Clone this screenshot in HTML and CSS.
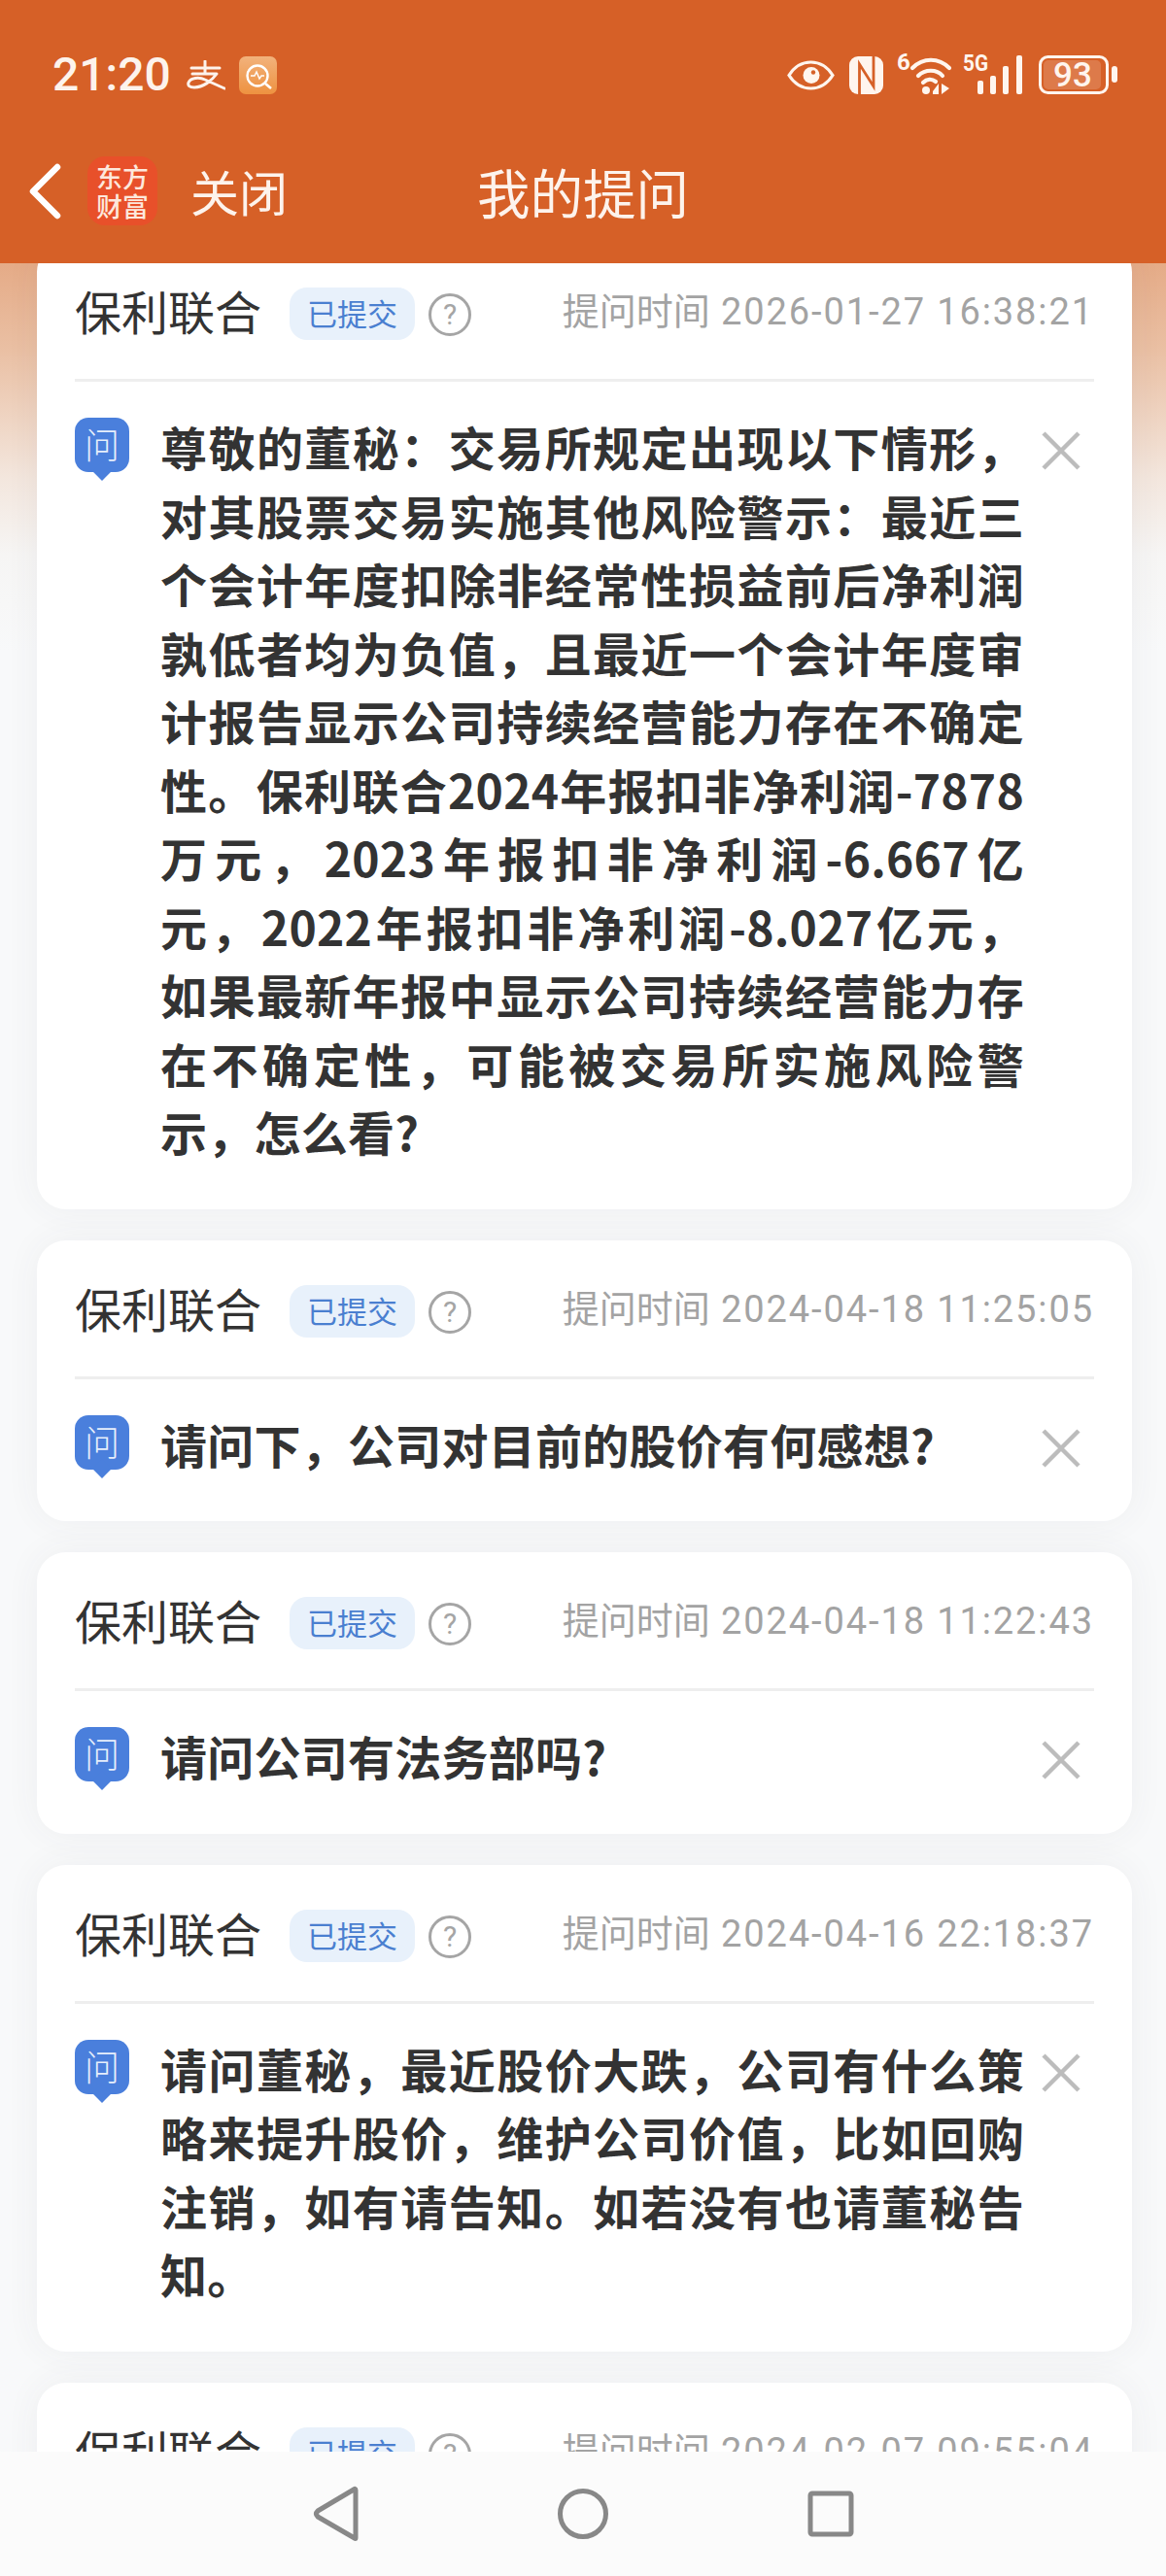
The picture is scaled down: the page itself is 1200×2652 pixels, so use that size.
FILE: index.html
```html
<!DOCTYPE html>
<html lang="zh-CN">
<head>
<meta charset="utf-8">
<title>我的提问</title>
<link rel="stylesheet" href="styles.css">
</head>
<body>
<div class="phone">
  <header class="top">
    <div class="status">
      <div class="status-left">
        <span class="clock">21:20</span>
        <svg class="ali" viewBox="0 0 41 31" width="41" height="31"><path d="M6 8h29M20 1v13M7 14h25C27 21 18 28 9 28 4 28 2 26 3 23 5 18 14 17 20 20L40 29" fill="none" stroke="#fdf3ec" stroke-width="3" stroke-linecap="round" stroke-linejoin="round"/></svg>
        <svg class="app" viewBox="0 0 39 39" width="39" height="39"><defs><linearGradient id="ag" x1="0" y1="0" x2="0" y2="1"><stop offset="0" stop-color="#f2b27c"/><stop offset="1" stop-color="#ee9240"/></linearGradient></defs><rect width="39" height="39" rx="7" fill="url(#ag)"/><circle cx="19" cy="20" r="10.5" fill="none" stroke="#fff" stroke-width="2.4"/><path d="M27 28l6 5" stroke="#fff" stroke-width="2.6"/><path d="M12 20h4l2-4 3 7 2-3h3" fill="none" stroke="#fff" stroke-width="1.4"/></svg>
      </div>
      <div class="status-right">
        <svg class="s-eye" viewBox="0 0 49 31" width="49" height="31"><path d="M2 15.500C8 6 16 2 24.500 2S41 6 47 15.500C41 25 33 29 24.500 29S8 25 2 15.500Z" fill="none" stroke="#fff5ee" stroke-width="3.200"/><circle cx="25" cy="15.500" r="8.500" fill="#fff5ee"/><circle cx="27" cy="12.500" r="2.200" fill="#d66027"/></svg>
        <svg class="s-nfc" viewBox="0 0 37 39" width="37" height="39"><rect x="1" width="35" height="39" rx="9" fill="#fff5ee"/><path d="M11.500 39V8L26 31V0" fill="none" stroke="#d66027" stroke-width="2.800"/></svg>
        <svg class="s-wifi" viewBox="0 0 56 42" width="56" height="42"><text x="0" y="16" class="mini">6</text><g fill="none" stroke="#fff5ee" stroke-width="4.200" stroke-linecap="round"><path d="M16 14C27 3 43 3 54 14"/><path d="M22 22C29 15 41 15 47 22"/><path d="M27 29C31 25 36 25 40 28"/></g><circle cx="30" cy="37" r="4" fill="#fff5ee"/><path d="M37 38l6-8v11h-6zM46 30v11l8-6z" fill="#fff5ee"/></svg>
        <svg class="s-sig" viewBox="0 0 62 40" width="62" height="40"><text x="0" y="16" class="mini" textLength="26" lengthAdjust="spacingAndGlyphs">5G</text><g fill="#fff5ee"><rect x="15" y="26" width="6" height="14" rx="2"/><rect x="28" y="21" width="6" height="19" rx="2"/><rect x="41" y="11" width="6" height="29" rx="2"/><rect x="55" y="0" width="6" height="40" rx="2"/></g></svg>
        <svg class="s-bat" viewBox="0 0 81 40" width="81" height="40"><rect x="1.500" y="1.500" width="69" height="37" rx="8" fill="none" stroke="#fff5ee" stroke-width="3"/><rect x="5" y="5" width="59" height="30" rx="5" fill="#fff5ee" fill-opacity=".18"/><text x="35" y="32" text-anchor="middle" class="batnum">93</text><rect x="75" y="11" width="6" height="17" rx="3" fill="#fff5ee"/></svg>
      </div>
    </div>
    <nav class="bar">
      <div class="bar-left">
        <svg class="back" viewBox="0 0 34 58" width="34" height="58"><path d="M30 4L5 29l25 25" fill="none" stroke="#fff" stroke-width="6.500" stroke-linecap="round" stroke-linejoin="round"/></svg>
        <div class="logo"><span>东方</span><span>财富</span></div>
        <span class="close">关闭</span>
      </div>
      <h1 class="title">我的提问</h1>
      <div></div>
    </nav>
  </header>

  <main class="list">
    <section class="card">
      <div class="head"><span class="name">保利联合</span><span class="badge">已提交</span><span class="help">?</span><span class="time"><span class="time-l">提问时间</span> 2026-01-27 16:38:21</span></div>
      <div class="body"><span class="q"><span>问</span></span><p class="text">尊敬的董秘：交易所规定出现以下情形，对其股票交易实施其他风险警示：最近三个会计年度扣除非经常性损益前后净利润孰低者均为负值，且最近一个会计年度审计报告显示公司持续经营能力存在不确定性。保利联合2024年报扣非净利润-7878万元，2023年报扣非净利润-6.667亿元，2022年报扣非净利润-8.027亿元，如果最新年报中显示公司持续经营能力存在不确定性，可能被交易所实施风险警示，怎么看?</p><svg class="x" viewBox="0 0 40 40" width="40" height="40"><path d="M2 2l36 36M38 2L2 38" stroke="#bcbcbc" stroke-width="4.500"/></svg></div>
    </section>
    <section class="card">
      <div class="head"><span class="name">保利联合</span><span class="badge">已提交</span><span class="help">?</span><span class="time"><span class="time-l">提问时间</span> 2024-04-18 11:25:05</span></div>
      <div class="body"><span class="q"><span>问</span></span><p class="text">请问下，公司对目前的股价有何感想?</p><svg class="x" viewBox="0 0 40 40" width="40" height="40"><path d="M2 2l36 36M38 2L2 38" stroke="#bcbcbc" stroke-width="4.500"/></svg></div>
    </section>
    <section class="card">
      <div class="head"><span class="name">保利联合</span><span class="badge">已提交</span><span class="help">?</span><span class="time"><span class="time-l">提问时间</span> 2024-04-18 11:22:43</span></div>
      <div class="body"><span class="q"><span>问</span></span><p class="text">请问公司有法务部吗?</p><svg class="x" viewBox="0 0 40 40" width="40" height="40"><path d="M2 2l36 36M38 2L2 38" stroke="#bcbcbc" stroke-width="4.500"/></svg></div>
    </section>
    <section class="card">
      <div class="head"><span class="name">保利联合</span><span class="badge">已提交</span><span class="help">?</span><span class="time"><span class="time-l">提问时间</span> 2024-04-16 22:18:37</span></div>
      <div class="body"><span class="q"><span>问</span></span><p class="text">请问董秘，最近股价大跌，公司有什么策略来提升股价，维护公司价值，比如回购注销，如有请告知。如若没有也请董秘告知。</p><svg class="x" viewBox="0 0 40 40" width="40" height="40"><path d="M2 2l36 36M38 2L2 38" stroke="#bcbcbc" stroke-width="4.500"/></svg></div>
    </section>
    <section class="card">
      <div class="head"><span class="name">保利联合</span><span class="badge">已提交</span><span class="help">?</span><span class="time"><span class="time-l">提问时间</span> 2024-02-07 09:55:04</span></div>
    </section>
  </main>

  <footer class="sysnav">
    <svg viewBox="0 0 50 58" width="50" height="58"><path d="M46 4.500v49q0 2-2 0L7 32q-3-3 0-6L44 4q2-1.500 2 .5Z" fill="none" stroke="#888" stroke-width="5" stroke-linejoin="round"/></svg>
    <svg viewBox="0 0 58 58" width="58" height="58"><circle cx="29" cy="29" r="23.500" fill="none" stroke="#888" stroke-width="5"/></svg>
    <svg viewBox="0 0 58 58" width="58" height="58"><rect x="8" y="8" width="42" height="42" rx="2" fill="none" stroke="#888" stroke-width="5"/></svg>
  </footer>
</div>
</body>
</html>
```
FILE: styles.css
```css
* { box-sizing: border-box; }
html, body { margin: 0; padding: 0; }
body { font-family: "Noto Sans CJK SC", "Noto Sans", sans-serif; }
.phone { width: 1200px; height: 2652px; display: flex; flex-direction: column; overflow: hidden; background: #f8f9fa; }

.top { height: 271px; flex: none; background: #d66027; color: #fff; position: relative; z-index: 2; }
.status { height: 162px; padding: 57px 50px 0 54px; display: flex; justify-content: space-between; align-items: flex-start; }
.status-left { display: flex; align-items: center; height: 40px; }
.clock { font-family: Roboto, sans-serif; font-weight: 500; font-size: 48px; line-height: 40px; color: #fdf3ec; width: 137px; }
.ali { margin-right: 14px; }
.status-right { display: flex; align-items: center; height: 40px; }
.status-right svg { overflow: visible; }
.s-eye { margin-right: 14px; }
.s-nfc { margin-right: 13px; }
.s-wifi { margin-right: 12px; }
.s-sig { margin-right: 16px; }
.mini { font-family: Roboto, sans-serif; font-size: 24px; font-weight: 700; fill: #fff5ee; }
.batnum { font-family: Roboto, sans-serif; font-size: 35px; font-weight: 500; fill: #fff5ee; }

.bar { height: 71px; display: grid; grid-template-columns: 1fr auto 1fr; align-items: center; padding: 0 29px; margin-top: -1px; }
.bar-left { display: flex; align-items: center; }
.back { margin-right: 27px; }
.logo { width: 72px; height: 71px; border-radius: 18px; background: #e8502a; display: flex; flex-direction: column; align-items: center; justify-content: center; font-size: 27px; line-height: 30px; font-weight: 500; color: #fde8dc; margin-right: 34px; }
.close { font-size: 50px; line-height: 71px; color: #fdf3ec; }
.title { margin: 0; font-size: 54.5px; line-height: 71px; font-weight: 400; color: #fdf3ec; }

.list { flex: 1; min-height: 0; overflow: hidden; padding: 0 35px 0 38px; background: linear-gradient(180deg, #e5ab87 0, #eac0a4 90px, #f3e6dd 220px, #f6f5f4 300px, #f8f9fa 400px) no-repeat; }
.card { background: #fff; border-radius: 30px; margin-bottom: 32px; box-shadow: 0 0 36px rgba(60,70,90,.06); }
.card:first-child { margin-top: -21px; }

.head { margin: 0 39px; height: 143px; padding-top: 46px; border-bottom: 3px solid #eee; display: flex; align-items: flex-start; }
.name { font-size: 48px; line-height: 54px; color: #333; width: 221px; flex: none; margin-top: -4px; }
.badge { width: 129px; height: 54px; border-radius: 18px; background: #e8f1fb; color: #4a7fd0; font-size: 31px; line-height: 52px; text-align: center; flex: none; }
.help { width: 44px; height: 44px; margin: 6px 0 0 14px; border: 3px solid #a5a5a5; border-radius: 50%; color: #a5a5a5; font-family: Roboto, sans-serif; font-size: 30px; line-height: 38px; text-align: center; flex: none; }
.time { margin-left: auto; margin-top: -4px; font-family: Roboto, sans-serif; font-size: 38px; line-height: 52px; color: #a3a3a3; white-space: nowrap; letter-spacing: 1.9px; }
.time-l { font-family: "Noto Sans CJK SC", sans-serif; letter-spacing: 0; }

.body { margin: 0 39px; padding: 36px 0 45px; display: flex; align-items: flex-start; }
.q { position: relative; width: 56px; height: 56px; border-radius: 14px; background: #4a7fdc; color: #e6eefb; font-size: 36px; line-height: 52px; text-align: center; font-weight: 300; flex: none; margin-top: 1px; margin-right: 33px; }
.q::after { content: ""; position: absolute; left: 21px; bottom: -6px; width: 14px; height: 14px; background: #4a7fdc; transform: rotate(45deg); }
.q span { position: relative; z-index: 1; }
.text { margin: -5px 0 0 -1px; width: 889px; flex: none; font-size: 48px; line-height: 70.5px; font-weight: 700; color: #333; letter-spacing: .25px; text-align: justify; }
.x { flex: none; margin: 15px 0 0 18px; }

.sysnav { height: 128px; flex: none; background: #fbfbfb; display: flex; justify-content: center; align-items: center; padding-left: 4px; position: relative; z-index: 2; }
.sysnav svg:nth-child(2) { margin: 0 197px 0 201px; }
```
